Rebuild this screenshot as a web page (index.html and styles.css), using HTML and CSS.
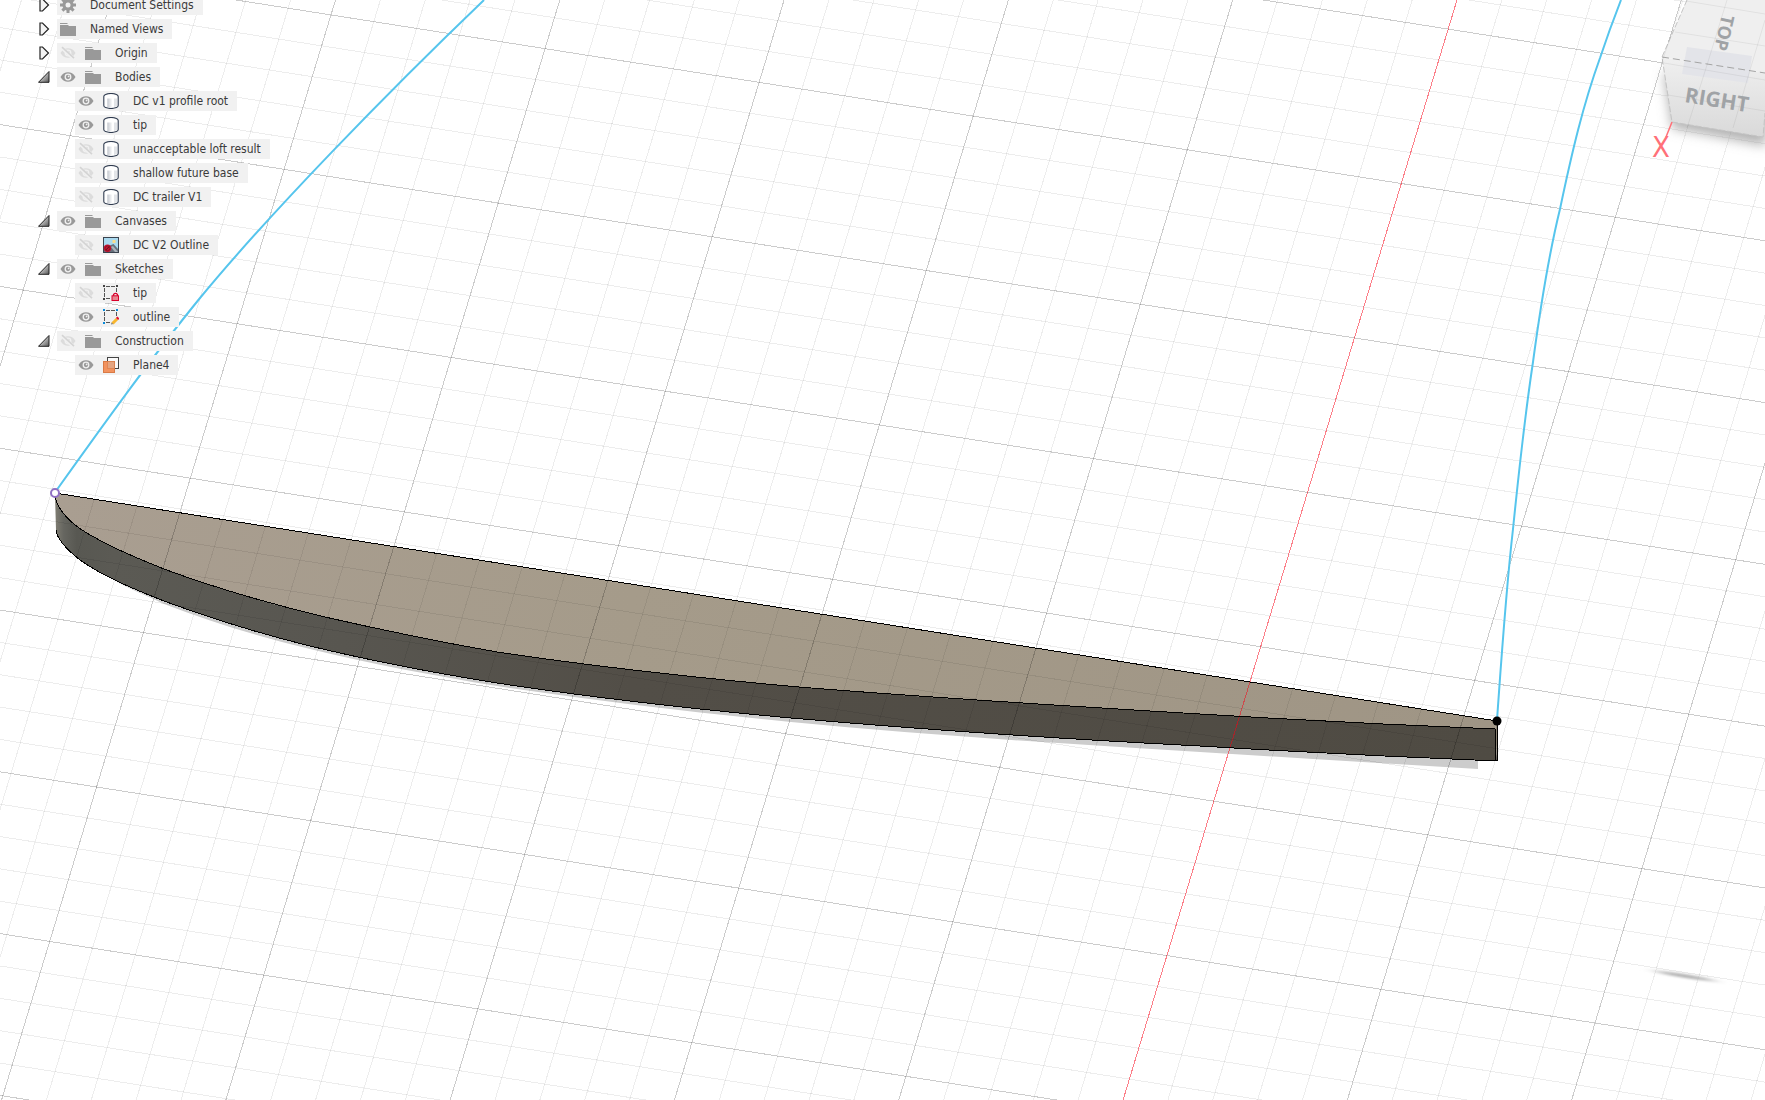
FILE: index.html
```html
<!DOCTYPE html>
<html lang="en">
<head>
    <meta charset="UTF-8">
    <title>Model Browser</title>
    <meta name="viewport" content="width=device-width, initial-scale=1.0">
    <link rel="stylesheet" href="styles.css">
</head>
<body>
    <!-- Icon set -->
    <svg class="defs" width="0" height="0" aria-hidden="true">
        <defs>
            <linearGradient id="arrowFill" x1="0" y1="0" x2="1" y2="1">
                <stop offset="0.2" stop-color="#eeeeee"/>
                <stop offset="1" stop-color="#555555"/>
            </linearGradient>
            <linearGradient id="cylFill" x1="0" y1="0" x2="1" y2="0">
                <stop offset="0" stop-color="#c3c7ce"/>
                <stop offset="1" stop-color="#ffffff"/>
            </linearGradient>
        </defs>
        <symbol id="closed" viewBox="0 0 12 14">
            <path d="M2 1 H4.5 L10.5 7 L4.5 13 H2 Z" fill="#f4f4f4" stroke="#222222" stroke-width="1.2"/>
        </symbol>
        <symbol id="open" viewBox="0 0 12 14">
            <path d="M11 1.5 V12.3 H0.5 Z" fill="url(#arrowFill)" stroke="#222222" stroke-width="1"/>
        </symbol>
        <symbol id="eye" viewBox="0 0 16 16">
            <path d="M0.5 8 C2.5 4.6 5 3.2 8 3.2 S13.5 4.6 15.5 8 C13.5 11.4 11 12.8 8 12.8 S2.5 11.4 0.5 8 Z" fill="#999999"/>
            <circle cx="8" cy="8" r="2.8" fill="#999999" stroke="#f1f1f1" stroke-width="1.3"/>
            <circle cx="8.6" cy="7.4" r="0.9" fill="#f1f1f1"/>
        </symbol>
        <symbol id="eyeOff" viewBox="0 0 16 16">
            <path d="M0.5 8 C2.5 4.6 5 3.2 8 3.2 S13.5 4.6 15.5 8 C13.5 11.4 11 12.8 8 12.8 S2.5 11.4 0.5 8 Z" fill="#dcdcdc"/>
            <circle cx="8" cy="8" r="2.8" fill="#dcdcdc" stroke="#f1f1f1" stroke-width="1.3"/>
            <path d="M2 3 L14 14" stroke="#f1f1f1" stroke-width="3.4"/>
            <path d="M2 2.2 L14 13.2" stroke="#d4d4d4" stroke-width="1.6"/>
        </symbol>
        <symbol id="folder" viewBox="0 0 16 16">
            <path d="M0 2 H7 L8 3 H0 Z M0 4 H8 L9 5 H16 V15 H0 Z" fill="#999999"/>
        </symbol>
        <symbol id="gear" viewBox="0 0 16 16">
            <g stroke="#999999" stroke-width="3">
                <path d="M8 0 V16 M0 8 H16 M2.4 2.4 L13.6 13.6 M13.6 2.4 L2.4 13.6"/>
            </g>
            <circle cx="8" cy="8" r="5.6" fill="#999999"/>
            <circle cx="8" cy="8" r="2.5" fill="#f1f1f1"/>
        </symbol>
        <symbol id="solid" viewBox="0 0 16 16">
            <path d="M0.8 3.5 Q0.8 2 2.6 1.4 Q8 -0.4 13.4 1.4 Q15.2 2 15.2 3.5 V12.5 Q15.2 14 13.4 14.6 Q8 16.4 2.6 14.6 Q0.8 14 0.8 12.5 Z" fill="#ffffff"/>
            <path d="M4.3 5.5 H9.5 V14.3 H4.3 Z" fill="url(#cylFill)"/>
            <path d="M11 5.5 H14 V13 L11 14 Z" fill="#e3e5e8"/>
            <path d="M0.8 3.5 Q0.8 2 2.6 1.4 Q8 -0.4 13.4 1.4 Q15.2 2 15.2 3.5 V12.5 Q15.2 14 13.4 14.6 Q8 16.4 2.6 14.6 Q0.8 14 0.8 12.5 Z" fill="none" stroke="#2f3b4f" stroke-width="1.1"/>
        </symbol>
        <symbol id="picture" viewBox="0 0 16 16">
            <rect x="0.5" y="0.5" width="15" height="15" fill="#a9d9ef" stroke="#39434f"/>
            <rect x="9.5" y="3" width="3" height="3" fill="#f9dc8a"/>
            <path d="M1 15 V11 L8 8 L10.5 7 L15 12 V15 Z" fill="#66707c"/>
            <path d="M10 9 L15 15 H12 L8 10 Z" fill="#aab2ba"/>
            <circle cx="4.5" cy="11.3" r="3.7" fill="#c8102e"/>
            <path d="M2.6 13.2 L6.4 9.4" stroke="#5a1620" stroke-width="1"/>
            <circle cx="4.5" cy="11.3" r="2.4" fill="none" stroke="#7d1525" stroke-width="0.8"/>
        </symbol>
        <symbol id="sketchLocked" viewBox="0 0 16 16">
            <path d="M3 1.5 H12 M1.5 3 V12 M13.5 3 V7 M3 13.5 H7" stroke="#555555" stroke-dasharray="4 1" fill="none"/>
            <path d="M0 0 h2 v2 h-2 Z M13 0 h2 v2 h-2 Z M0 13 h2 v2 h-2 Z" fill="#444444"/>
            <path d="M10.5 11 V9.5 Q12.5 7.3 14.5 9.5 V11" fill="none" stroke="#d9002b" stroke-width="1.2"/>
            <rect x="9" y="10.8" width="6.5" height="4.7" fill="#e9848f" stroke="#d9002b" stroke-width="1"/>
        </symbol>
        <symbol id="sketch" viewBox="0 0 16 16">
            <path d="M3 1.5 H12 M1.5 3 V12 M13.5 3 V7 M3 13.5 H7" stroke="#555555" stroke-dasharray="4 1" fill="none"/>
            <path d="M0 0 h2 v2 h-2 Z M13 0 h2 v2 h-2 Z M0 13 h2 v2 h-2 Z" fill="#0a8ad8"/>
            <path d="M9.5 14.5 L14 10" stroke="#f8b62d" stroke-width="3"/>
            <path d="M13.6 8.2 L15.8 10.2" stroke="#e0122e" stroke-width="2"/>
            <path d="M8 15.6 L8.6 13.4 L10.3 15 Z" fill="#777777"/>
        </symbol>
        <symbol id="plane" viewBox="0 0 16 16">
            <rect x="4.5" y="0.5" width="11" height="11" fill="#fafafa" stroke="#444444"/>
            <rect x="0.5" y="4.5" width="11" height="11" fill="#f2935f" stroke="#d97a45"/>
            <rect x="4.5" y="4.5" width="7" height="7" fill="#e5a581" stroke="#d97a45" stroke-width="0.6"/>
        </symbol>
    </svg>

    <!-- Viewport -->
    <svg class="scene" role="img" aria-label="3D view of the model">
        <defs>
            <linearGradient id="topFace" gradientUnits="userSpaceOnUse" x1="55" y1="0" x2="1497" y2="0">
                <stop offset="0" stop-color="#a99e91"/>
                <stop offset="0.4" stop-color="#a59b8a"/>
                <stop offset="1" stop-color="#9f9585"/>
            </linearGradient>
            <linearGradient id="sideFace" gradientUnits="userSpaceOnUse" x1="55" y1="0" x2="1497" y2="0">
                <stop offset="0" stop-color="#807e73"/>
                <stop offset="0.006" stop-color="#666660"/>
                <stop offset="0.015" stop-color="#585852"/>
                <stop offset="0.04" stop-color="#5b5a54"/>
                <stop offset="0.2" stop-color="#585650"/>
                <stop offset="0.4" stop-color="#524e47"/>
                <stop offset="1" stop-color="#4f4b43"/>
            </linearGradient>
            <filter id="soft" x="-40%" y="-300%" width="180%" height="700%">
                <feGaussianBlur stdDeviation="8 1"/>
            </filter>
        </defs>

        <path class="shadow" d="M115 581 C136 592 150 597 164 604 C213 623 261 637 310 649 C372 664 435 676 497 686 C595 701 693 712 791 722 C927 735 1064 744 1200 752 L1313 759 L1478 769 V758 L1200 745 L791 716 L497 681 L310 643 Z"/>
        <path fill="url(#sideFace)" d="M55 495 C56 507 68 521 82 530 C109 547 137 558 164 569 C218 589 271 604 325 617 C382 630 440 642 497 652 C598 667 698 678 799 687 C933 698 1066 706 1200 714 C1298 720 1397 725 1495 729 L1497 761 C1398 757 1299 752 1200 746 C1064 739 927 730 791 718 C693 709 595 698 497 683 C435 673 372 661 310 646 C261 634 213 619 164 601 C136 590 104 577 80 560 C66 549 57 539 56 530 Z"/>
        <path fill="url(#topFace)" d="M55 493 L1497 721 L1495 729 C1397 725 1298 720 1200 714 C1066 706 933 698 799 687 C698 678 598 667 497 652 C440 642 382 630 325 617 C271 604 218 589 164 569 C137 558 109 547 82 530 C68 521 56 507 55 495 Z"/>
        <path fill="#8a8273" d="M1495 729 L1497 721 L1498 743 L1497 761 Z"/>

        <g id="grid"></g>

        <g class="edges">
            <path d="M55 493 L1497 721"/>
            <path d="M55 495 C56 507 68 521 82 530 C109 547 137 558 164 569 C218 589 271 604 325 617 C382 630 440 642 497 652 C598 667 698 678 799 687 C933 698 1066 706 1200 714 C1298 720 1397 725 1495 729"/>
            <path d="M56 530 C57 539 66 549 80 560 C104 577 136 590 164 601 C213 619 261 634 310 646 C372 661 435 673 497 683 C595 698 693 709 791 718 C927 730 1064 739 1200 746 C1299 752 1398 757 1497 761"/>
            <path d="M1495 729 L1496 760 M1497 721 L1498 743 L1497 761"/>
        </g>

        <path class="spline" d="M56 491 C106 421 152 357 200 298 C270 213 388 92 484 0"/>
        <path class="spline" d="M1497 720 C1502 650 1506 590 1513 529 C1519 470 1525 415 1533 362 C1540 310 1548 258 1560 209 C1572 152 1583 105 1600 58 C1607 37 1614 18 1621 0"/>
        <circle cx="55" cy="493" r="4" fill="#ffffff" stroke="#9070c4" stroke-width="2"/>
        <circle cx="1497" cy="721" r="4.5" fill="#000000"/>
        <ellipse cx="1685" cy="976" rx="29" ry="2" fill="#b4b4b4" transform="rotate(9 1685 976)" filter="url(#soft)"/>
    </svg>

    <!-- View cube -->
    <svg class="view-cube" viewBox="0 0 165 170" role="img" aria-label="View cube">
        <defs>
            <linearGradient id="cubeSide" x1="0" y1="0" x2="0" y2="1">
                <stop offset="0" stop-color="#f0f0f0"/>
                <stop offset="1" stop-color="#d9d9d9"/>
            </linearGradient>
            <filter id="cubeBlur" x="-30%" y="-30%" width="160%" height="160%">
                <feGaussianBlur stdDeviation="6"/>
            </filter>
        </defs>
        <path d="M64 72 L72 128 L166 146 V90 Z" fill="#9a9a9a" fill-opacity="0.75" filter="url(#cubeBlur)"/>
        <path d="M87 0 L62 57 L165 73 V0 Z" fill="#efefef"/>
        <path d="M62 57 L72 122 L163 137 L165 113 V73 Z" fill="url(#cubeSide)"/>
        <path d="M87 47 L152 56 L148 83 L82 74 Z" fill="#e3e4e9"/>
        <path class="cube-edge" d="M87 0 L62 57 L72 122 L163 137 L165 113"/>
        <path class="cube-edge cube-edge-dark" d="M62 57 L165 73"/>
        <g class="cube-grid">
            <path d="M83 0 L62 62 M127 0 L107 65 L87 128 M165 20 L150 70 L133 128"/>
            <path d="M86 1 L165 14 M75 32 L165 46 M64 63 L165 80 M68 95 L165 111"/>
        </g>
        <text class="cube-right" transform="translate(84 102) rotate(9)">RIGHT</text>
        <text class="cube-top" transform="translate(122 14) rotate(103)">TOP</text>
        <path d="M72 122 L66 137" stroke="#ff7078" stroke-width="1.5"/>
        <text class="axis-x" x="52" y="157">X</text>
    </svg>

    <!-- Browser tree -->
    <nav class="tree" aria-label="Browser">
        <ul>
            <li>
                <div class="row">
                    <button class="toggle" aria-label="Expand"><svg><use href="#closed"/></svg></button>
                    <div class="chip"><svg class="icon"><use href="#gear"/></svg><span>Document Settings</span></div>
                </div>
            </li>
            <li>
                <div class="row">
                    <button class="toggle" aria-label="Expand"><svg><use href="#closed"/></svg></button>
                    <div class="chip"><svg class="icon"><use href="#folder"/></svg><span>Named Views</span></div>
                </div>
            </li>
            <li>
                <div class="row">
                    <button class="toggle" aria-label="Expand"><svg><use href="#closed"/></svg></button>
                    <div class="chip"><button class="eye" aria-label="Show"><svg><use href="#eyeOff"/></svg></button><svg class="icon"><use href="#folder"/></svg><span>Origin</span></div>
                </div>
            </li>
            <li>
                <div class="row">
                    <button class="toggle" aria-label="Collapse"><svg><use href="#open"/></svg></button>
                    <div class="chip"><button class="eye" aria-label="Hide"><svg><use href="#eye"/></svg></button><svg class="icon"><use href="#folder"/></svg><span>Bodies</span></div>
                </div>
                <ul class="children">
                    <li class="chip"><button class="eye" aria-label="Hide"><svg><use href="#eye"/></svg></button><svg class="icon"><use href="#solid"/></svg><span>DC v1 profile root</span></li>
                    <li class="chip"><button class="eye" aria-label="Hide"><svg><use href="#eye"/></svg></button><svg class="icon"><use href="#solid"/></svg><span>tip</span></li>
                    <li class="chip"><button class="eye" aria-label="Show"><svg><use href="#eyeOff"/></svg></button><svg class="icon"><use href="#solid"/></svg><span>unacceptable loft result</span></li>
                    <li class="chip"><button class="eye" aria-label="Show"><svg><use href="#eyeOff"/></svg></button><svg class="icon"><use href="#solid"/></svg><span>shallow future base</span></li>
                    <li class="chip"><button class="eye" aria-label="Show"><svg><use href="#eyeOff"/></svg></button><svg class="icon"><use href="#solid"/></svg><span>DC trailer V1</span></li>
                </ul>
            </li>
            <li>
                <div class="row">
                    <button class="toggle" aria-label="Collapse"><svg><use href="#open"/></svg></button>
                    <div class="chip"><button class="eye" aria-label="Hide"><svg><use href="#eye"/></svg></button><svg class="icon"><use href="#folder"/></svg><span>Canvases</span></div>
                </div>
                <ul class="children">
                    <li class="chip"><button class="eye" aria-label="Show"><svg><use href="#eyeOff"/></svg></button><svg class="icon"><use href="#picture"/></svg><span>DC V2 Outline</span></li>
                </ul>
            </li>
            <li>
                <div class="row">
                    <button class="toggle" aria-label="Collapse"><svg><use href="#open"/></svg></button>
                    <div class="chip"><button class="eye" aria-label="Hide"><svg><use href="#eye"/></svg></button><svg class="icon"><use href="#folder"/></svg><span>Sketches</span></div>
                </div>
                <ul class="children">
                    <li class="chip"><button class="eye" aria-label="Show"><svg><use href="#eyeOff"/></svg></button><svg class="icon"><use href="#sketchLocked"/></svg><span>tip</span></li>
                    <li class="chip"><button class="eye" aria-label="Hide"><svg><use href="#eye"/></svg></button><svg class="icon"><use href="#sketch"/></svg><span>outline</span></li>
                </ul>
            </li>
            <li>
                <div class="row">
                    <button class="toggle" aria-label="Collapse"><svg><use href="#open"/></svg></button>
                    <div class="chip"><button class="eye" aria-label="Show"><svg><use href="#eyeOff"/></svg></button><svg class="icon"><use href="#folder"/></svg><span>Construction</span></div>
                </div>
                <ul class="children">
                    <li class="chip"><button class="eye" aria-label="Hide"><svg><use href="#eye"/></svg></button><svg class="icon"><use href="#plane"/></svg><span>Plane4</span></li>
                </ul>
            </li>
        </ul>
    </nav>

    <script src="grid.js"></script>
</body>
</html>
```
FILE: styles.css
```css
* {
    box-sizing: border-box;
}
body {
    margin: 0;
    min-height: 100vh;
    overflow: hidden;
    background-color: #ffffff;
    color: #3a3a3a;
    font-family: "DejaVu Sans Condensed", "Noto Sans", sans-serif;
    font-size: 12px;
    line-height: 20px;
}
ul {
    list-style: none;
    margin: 0;
    padding: 0;
}
button {
    padding: 0;
    border: none;
    background: none;
    cursor: pointer;
}
.defs {
    position: absolute;
}

/* Viewport */
.scene {
    position: absolute;
    top: 0;
    left: 0;
    width: 100%;
    height: 100%;
}
.shadow {
    fill: #cccccc;
}
.grid-minor,
.grid-major,
.grid-axis {
    stroke-width: 1px;
    shape-rendering: crispEdges;
}
.grid-minor {
    stroke: rgba(0, 0, 0, 0.07);
}
.grid-major {
    stroke: rgba(0, 0, 0, 0.2);
}
.grid-axis {
    stroke: rgba(250, 0, 20, 0.5);
}
.edges {
    fill: none;
    stroke: #000000;
    stroke-width: 1px;
    shape-rendering: crispEdges;
}
.spline {
    fill: none;
    stroke: #56c5ed;
    stroke-width: 2px;
}

/* View cube */
.view-cube {
    position: absolute;
    top: 0;
    right: 0;
    width: 165px;
    height: 170px;
}
.cube-edge {
    fill: none;
    stroke: #c4c4c4;
    stroke-dasharray: 6 2;
}
.cube-edge-dark {
    stroke: #a4a4a4;
    stroke-dasharray: 7 4;
}
.cube-grid {
    fill: none;
    stroke: rgba(0, 0, 0, 0.06);
}
.cube-right,
.cube-top {
    fill: #a0a3a6;
    font-weight: bold;
}
.cube-right {
    font-family: "Open Sans", sans-serif;
    font-size: 21px;
}
.cube-top {
    font-family: "Open Sans", sans-serif;
    font-size: 18px;
}
.axis-x {
    fill: #ff7078;
    font-family: "DejaVu Sans Condensed", sans-serif;
    font-size: 29px;
}

/* Browser tree */
.tree {
    position: relative;
    width: max-content;
    margin-top: -5px;
    padding-left: 38px;
}
.row {
    display: flex;
    align-items: center;
    gap: 7px;
    margin-bottom: 4px;
}
.toggle {
    width: 12px;
    height: 14px;
}
.toggle svg {
    display: block;
    width: 12px;
    height: 14px;
}
.chip {
    display: flex;
    align-items: center;
    width: max-content;
    height: 20px;
    padding: 0 9px 0 3px;
    background-color: #f1f1f1;
}
.children {
    padding-left: 37px;
}
.children .chip {
    margin-bottom: 4px;
}
.eye {
    width: 16px;
    height: 16px;
    margin-right: 9px;
}
.eye svg,
.icon {
    display: block;
    width: 16px;
    height: 16px;
}
.icon {
    margin-right: 14px;
}
```
FILE: grid.js
```js
// Ground grid: two families of parallel lines, every fifth one is major
const grid = document.getElementById('grid');
const AXIS_X = 1457;      // red axis at the top of the view
const STEP_X = 44.86;
const LEAN = -0.3036;
const BASE_Y = 124.6;     // a major line at the left side
const STEP_Y = 32.36;
const FALL = 0.1575;

function addLine(x1, y1, x2, y2, name) {
    const line = document.createElementNS('http://www.w3.org/2000/svg', 'line');
    line.setAttribute('x1', x1);
    line.setAttribute('y1', y1);
    line.setAttribute('x2', x2);
    line.setAttribute('y2', y2);
    line.setAttribute('class', name);
    grid.appendChild(line);
}

function drawGrid() {
    const w = window.innerWidth;
    const h = window.innerHeight;
    grid.innerHTML = '';

    const firstX = Math.floor(-AXIS_X / STEP_X);
    const lastX = Math.ceil((w - LEAN * h - AXIS_X) / STEP_X);
    for (let i = firstX; i <= lastX; i++) {
        const x = AXIS_X + i * STEP_X;
        const name = i === 0 ? 'grid-axis' : i % 5 === 0 ? 'grid-major' : 'grid-minor';
        addLine(x, 0, x + LEAN * h, h, name);
    }

    const firstY = Math.floor((-FALL * w - BASE_Y) / STEP_Y);
    const lastY = Math.ceil((h - BASE_Y) / STEP_Y);
    for (let i = firstY; i <= lastY; i++) {
        const y = BASE_Y + i * STEP_Y;
        addLine(0, y, w, y + FALL * w, i % 5 === 0 ? 'grid-major' : 'grid-minor');
    }
}

drawGrid();
window.addEventListener('resize', drawGrid);
```
